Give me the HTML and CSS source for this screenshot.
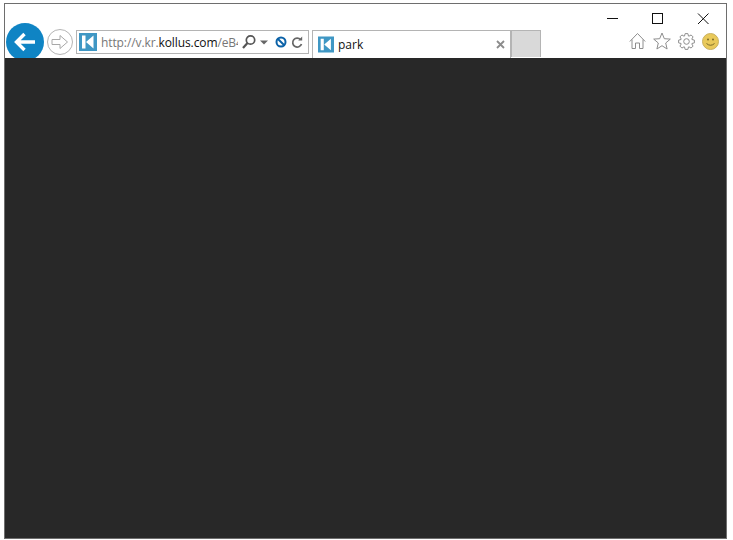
FILE: index.html
```html
<!DOCTYPE html>
<html lang="en">
<head>
    <meta charset="UTF-8">
    <meta name="viewport" content="width=device-width, initial-scale=1.0">
    <title>park</title>
    <link rel="stylesheet" href="styles.css">
</head>
<body>
    <div class="window">
        <div class="chrome">
            <div class="window-controls">
                <svg class="control" width="45" height="12" viewBox="0 0 45 12"><path d="M17 5.5H28" stroke="#111" fill="none"/></svg>
                <svg class="control" width="45" height="12" viewBox="0 0 45 12"><rect x="17.5" y="0.5" width="10" height="10" stroke="#111" fill="none"/></svg>
                <svg class="control" width="45" height="12" viewBox="0 0 45 12"><path d="M18 0.5L28.5 11M28.5 0.5L18 11" stroke="#111" fill="none"/></svg>
            </div>
            <div class="toolbar">
                <div class="back-btn">
                    <svg width="24" height="20" viewBox="0 0 24 20"><path d="M22 10H4M11.5 2L3.5 10L11.5 18" stroke="#fff" stroke-width="3.4" fill="none"/></svg>
                </div>
                <div class="forward-btn">
                    <svg width="18" height="16" viewBox="0 0 18 16"><path d="M1 5.5H9V1.5L16.5 8L9 14.5V10.5H1Z" stroke="#a8a8a8" fill="none"/></svg>
                </div>
                <div class="address-bar">
                    <svg class="site-icon" width="18" height="18" viewBox="0 0 18 18"><rect width="18" height="18" fill="#3f97c4"/><path d="M3 2.5H6.5V15.5H3ZM14.5 2.5V15.5L7 9Z" fill="#fff"/></svg>
                    <div class="url"><span class="url-dim">http://v.kr.</span>kollus.com<span class="url-dim">/eB4</span></div>
                    <div class="address-tools">
                        <svg width="16" height="16" viewBox="0 0 16 16"><circle cx="9.5" cy="6" r="4.2" stroke="#555" stroke-width="1.7" fill="none"/><path d="M6.5 9L2 14" stroke="#555" stroke-width="2.2" fill="none"/></svg>
                        <svg width="8" height="5" viewBox="0 0 8 5"><path d="M0 0.5H8L4 4.5Z" fill="#666"/></svg>
                        <svg class="stop-icon" width="12" height="12" viewBox="0 0 12 12"><circle cx="6" cy="6" r="4.5" stroke="#0b62a8" stroke-width="2" fill="none"/><path d="M3 3L9 9" stroke="#0b62a8" stroke-width="2"/></svg>
                        <svg class="refresh-icon" width="12" height="13" viewBox="0 0 12 13"><path d="M9.6 3.6A4.5 4.5 0 1 0 10.5 8" stroke="#666" stroke-width="1.7" fill="none"/><path d="M7.2 4.6H11.2V0.6Z" fill="#666"/></svg>
                    </div>
                </div>
                <div class="tab">
                    <svg class="site-icon" width="16" height="17" viewBox="0 0 18 18"><rect width="18" height="18" fill="#3f97c4"/><path d="M3 2.5H6.5V15.5H3ZM14.5 2.5V15.5L7 9Z" fill="#fff"/></svg>
                    <span class="tab-title">park</span>
                    <svg class="tab-close" width="9" height="9" viewBox="0 0 9 9"><path d="M1 1L8 8M8 1L1 8" stroke="#8c8c8c" stroke-width="1.8"/></svg>
                </div>
                <div class="new-tab"></div>
                <div class="tools">
                    <svg width="17" height="18" viewBox="0 0 17 18"><path d="M0.8 9.5L8.5 1.5L16.2 9.5M3 7.5V16.5H6.5V11H10.5V16.5H14V7.5" stroke="#8e8e8e" fill="none"/></svg>
                    <svg width="18" height="18" viewBox="0 0 18 18"><path d="M9 1L11.3 6.7L17.3 7.1L12.7 11L14.1 17L9 13.7L3.9 17L5.3 11L0.7 7.1L6.7 6.7Z" stroke="#8e8e8e" fill="none"/></svg>
                    <svg width="17" height="17" viewBox="-8.5 -8.5 17 17"><path d="M5.45 -1.98L7.88 -1.39L7.88 1.39L5.45 1.98L5.26 2.45L6.55 4.59L4.59 6.55L2.45 5.26L1.98 5.45L1.39 7.88L-1.39 7.88L-1.98 5.45L-2.45 5.26L-4.59 6.55L-6.55 4.59L-5.26 2.45L-5.45 1.98L-7.88 1.39L-7.88 -1.39L-5.45 -1.98L-5.26 -2.45L-6.55 -4.59L-4.59 -6.55L-2.45 -5.26L-1.98 -5.45L-1.39 -7.88L1.39 -7.88L1.98 -5.45L2.45 -5.26L4.59 -6.55L6.55 -4.59L5.26 -2.45Z" stroke="#8e8e8e" stroke-linejoin="round" fill="none"/><circle r="2.8" stroke="#8e8e8e" fill="none"/></svg>
                    <svg width="17" height="17" viewBox="0 0 17 17"><circle cx="8.5" cy="8.5" r="8" fill="#e9c95a" stroke="#c9b060" stroke-width="1"/><circle cx="6" cy="6.5" r="1" fill="#7a6a2a"/><circle cx="11" cy="6.5" r="1" fill="#7a6a2a"/><path d="M4.5 10.5Q8.5 14 12.5 10.5" stroke="#7a6a2a" fill="none"/></svg>
                </div>
            </div>
        </div>
        <div class="content"></div>
    </div>
</body>
</html>
```

FILE: styles.css
```css
* {
    margin: 0;
    padding: 0;
    box-sizing: border-box;
}

body {
    font-family: "Open Sans", "Noto Sans", sans-serif;
    background: white;
    height: 540px;
    overflow: hidden;
    padding: 3px 6px 0 4px;
}

.window {
    height: 536px;
    border: 1px solid #6e6e6e;
    display: flex;
    flex-direction: column;
    background: #282828;
}

.chrome {
    height: 54px;
    flex-shrink: 0;
    background: white;
    overflow: hidden;
}

.window-controls {
    height: 26px;
    padding: 9px 1px 0 0;
    display: flex;
    justify-content: flex-end;
}

.control {
    display: block;
}

.toolbar {
    display: flex;
    align-items: flex-start;
    padding-left: 1px;
    margin-top: -7px;
}

.back-btn {
    width: 38px;
    height: 38px;
    border-radius: 50%;
    background: #0f84c4;
    display: flex;
    align-items: center;
    justify-content: center;
    flex-shrink: 0;
}

.forward-btn {
    width: 26px;
    height: 26px;
    border-radius: 50%;
    border: 1px solid #b4b4b4;
    margin: 6px 0 0 3px;
    display: flex;
    align-items: center;
    justify-content: center;
    flex-shrink: 0;
}

.address-bar {
    width: 233px;
    height: 24px;
    margin: 7px 0 0 3px;
    border: 1px solid #b4b4b4;
    display: flex;
    align-items: center;
    padding-left: 2px;
    flex-shrink: 0;
}

.site-icon {
    flex-shrink: 0;
}

.url {
    width: 137px;
    margin-left: 4px;
    font-size: 12px;
    letter-spacing: -0.1px;
    color: #111;
    white-space: nowrap;
    overflow: hidden;
}

.url-dim {
    color: #777;
}

.address-tools {
    display: flex;
    align-items: center;
    margin-left: 3px;
}

.address-tools svg {
    flex-shrink: 0;
}

.address-tools svg + svg {
    margin-left: 3px;
}

.address-tools .stop-icon {
    margin-left: 7px;
}

.address-tools .refresh-icon {
    margin-left: 4px;
}

.tab {
    width: 199px;
    height: 28px;
    margin: 7px 0 0 3px;
    border: 1px solid #b4b4b4;
    border-bottom: none;
    display: flex;
    align-items: center;
    padding: 0 5px 0 5px;
    flex-shrink: 0;
}

.tab-title {
    font-size: 12px;
    color: #111;
    margin-left: 4px;
    flex: 1;
}

.new-tab {
    width: 30px;
    height: 27px;
    margin-top: 7px;
    background: #d9d9d9;
    border: 1px solid #b4b4b4;
    border-bottom: none;
    flex-shrink: 0;
}

.tools {
    display: flex;
    align-items: center;
    gap: 7px;
    margin: 9px 0 0 88px;
}
```
